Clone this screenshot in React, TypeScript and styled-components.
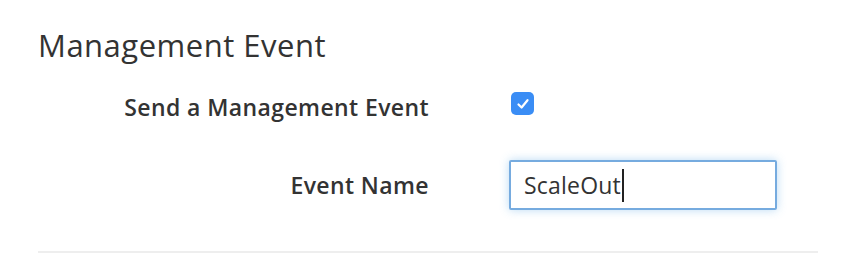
import styled, { createGlobalStyle } from 'styled-components';

const GlobalStyle = createGlobalStyle`
  body {
    margin: 0;
    background: #ffffff;
    font-family: 'Open Sans', 'Noto Sans', sans-serif;
    color: #333333;
  }
`;

const CheckIcon = () => (
  <svg width="14" height="14" viewBox="0 0 14 14" fill="none">
    <path d="M2.5 7.5 L5.6 10.5 L11.5 3.2" stroke="#ffffff" strokeWidth="2.2" strokeLinecap="round" strokeLinejoin="round" />
  </svg>
);

const App = () => {
  return (
    <>
      <GlobalStyle />
      <S.Section>
        <S.Title>Management Event</S.Title>
        <S.Form>
          <S.Row>
            <S.Label>Send a Management Event</S.Label>
            <S.Checkbox role="checkbox" aria-checked="true">
              <CheckIcon />
            </S.Checkbox>
          </S.Row>
          <S.Row>
            <S.Label>Event Name</S.Label>
            <S.TextBox>
              ScaleOut
              <S.Caret />
            </S.TextBox>
          </S.Row>
        </S.Form>
        <S.Divider />
      </S.Section>
    </>
  );
};

const S = {
  Section: styled.section`
    width: 780px;
    margin-left: 38px;
    padding-top: 26px;
  `,

  Title: styled.h2`
    margin: 0;
    font-size: 31px;
    font-weight: 400;
    line-height: 38px;
    letter-spacing: 0.5px;
    color: #333333;
  `,

  Form: styled.div`
    display: flex;
    flex-direction: column;
    gap: 38px;
    margin-top: 28px;
  `,

  Row: styled.div`
    display: grid;
    grid-template-columns: 391px 1fr;
    column-gap: 80px;
    align-items: center;
  `,

  Label: styled.label`
    text-align: right;
    font-size: 23px;
    font-weight: 600;
    line-height: 30px;
    letter-spacing: 0.4px;
    color: #333333;
  `,

  Checkbox: styled.span`
    display: flex;
    align-self: start;
    align-items: center;
    justify-content: center;
    width: 23px;
    height: 23px;
    margin-left: 2px;
    border-radius: 5px;
    background: #3a8df5;
  `,

  TextBox: styled.div`
    display: flex;
    align-items: center;
    box-sizing: border-box;
    width: 268px;
    height: 50px;
    padding-left: 13px;
    border: 2px solid #76abdf;
    border-radius: 2px;
    box-shadow: 0 0 10px rgba(102, 175, 233, 0.45);
    font-size: 23px;
    letter-spacing: 0.2px;
    color: #333333;
  `,

  Caret: styled.span`
    display: inline-block;
    width: 2px;
    height: 33px;
    margin-left: 1px;
    background: #222222;
  `,

  Divider: styled.hr`
    margin: 41px 0 0;
    border: none;
    height: 2px;
    background: #eeeeee;
  `,
};

export default App;
